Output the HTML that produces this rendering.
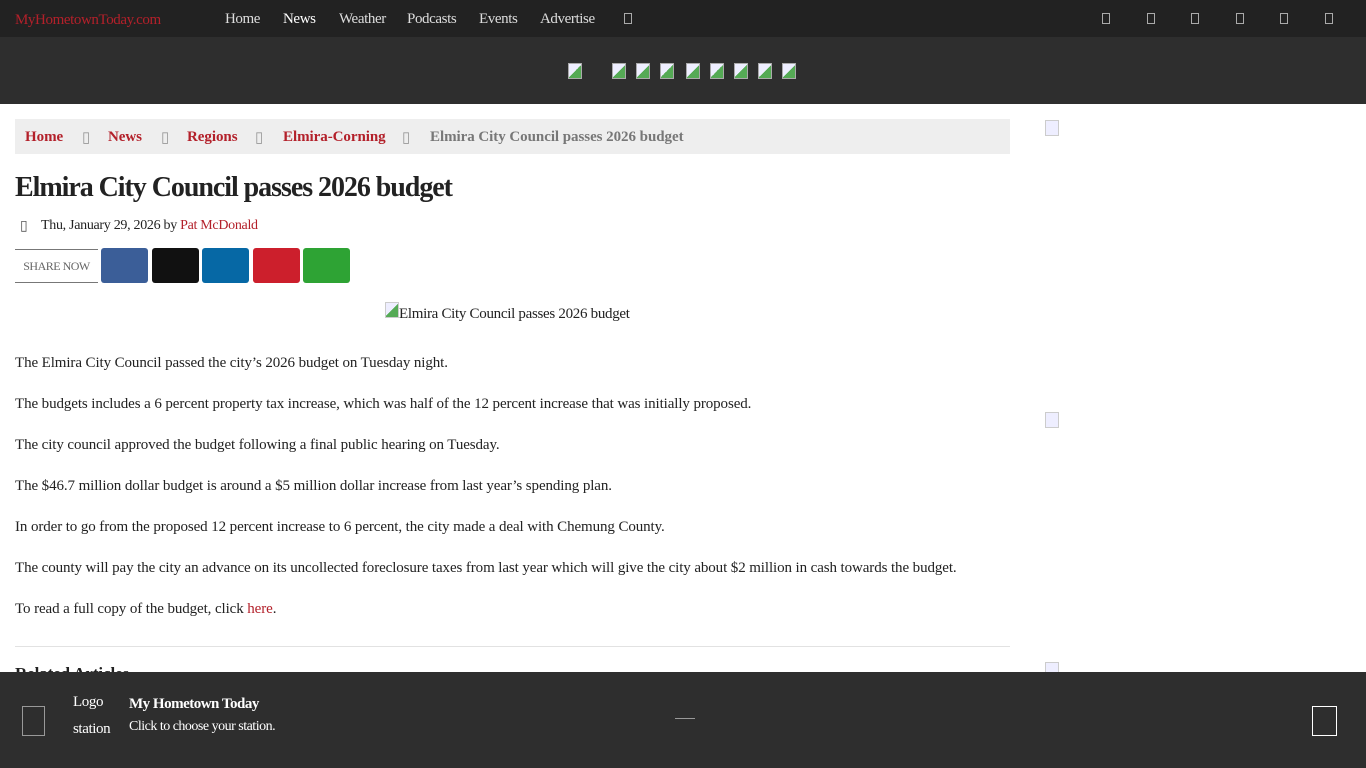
<!DOCTYPE html>
<html><head><meta charset="utf-8"><style>
*{box-sizing:border-box;margin:0;padding:0}
body{width:1366px;height:768px;overflow:hidden;background:#fff;font-family:"Liberation Serif",serif;color:#222;position:relative}
.top{height:37px;background:#222;position:relative}
.top span{position:absolute;top:11px;font-size:15px;color:#ddd;letter-spacing:-0.4px}
.band{height:67px;background:#2e2e2e;position:relative}
.ic{position:absolute;width:14px;height:16px;border:1px solid #aaa;background:linear-gradient(135deg,#eef 50%,#5a5 50%)}
.bc{position:absolute;left:15px;top:119px;width:995px;height:35px;background:#eee;font-weight:bold;font-size:15px;letter-spacing:-0.05px}
.bc span{position:absolute;top:10px}
.bc .s{font-weight:normal;color:#999;top:9px}
.r{color:#b3202a}
h1{position:absolute;left:15px;top:172px;font-size:28px;letter-spacing:-1.05px;color:#222;font-weight:bold}
.meta{position:absolute;left:41px;top:218px;font-size:14px;letter-spacing:-0.3px}
.share{position:absolute;left:15px;top:249px;width:83px;height:34px;border-top:1px solid #777;border-bottom:1px solid #777;font-size:12px;color:#666;line-height:32px;text-align:center;letter-spacing:-0.5px}
.btn{position:absolute;top:248px;width:47px;height:35px;border-radius:3px}
.p{position:absolute;left:15px;font-size:15px;letter-spacing:-0.1px}
.foot{position:absolute;left:0;top:672px;width:1366px;height:96px;background:#2e2e2e;color:#fff}
.box{position:absolute;border:1px solid #aaa}
</style></head><body>
<div class="top">
<span style="left:15px;top:12px;color:#b3202a">MyHometownToday.com</span>
<span style="left:225px">Home</span><span style="left:283px;color:#fff">News</span><span style="left:339px">Weather</span><span style="left:407px">Podcasts</span><span style="left:479px">Events</span><span style="left:540px">Advertise</span>
<div class="box" style="left:624px;top:13px;width:8px;height:11px"></div>
<div class="box" style="left:1102px;top:13px;width:8px;height:11px"></div>
<div class="box" style="left:1147px;top:13px;width:8px;height:11px"></div>
<div class="box" style="left:1191px;top:13px;width:8px;height:11px"></div>
<div class="box" style="left:1236px;top:13px;width:8px;height:11px"></div>
<div class="box" style="left:1280px;top:13px;width:8px;height:11px"></div>
<div class="box" style="left:1325px;top:13px;width:8px;height:11px"></div>
</div>
<div class="band">
<div class="ic" style="left:568px;top:26px"></div>
<div class="ic" style="left:612px;top:26px"></div><div class="ic" style="left:636px;top:26px"></div><div class="ic" style="left:660px;top:26px"></div><div class="ic" style="left:686px;top:26px"></div><div class="ic" style="left:710px;top:26px"></div><div class="ic" style="left:734px;top:26px"></div><div class="ic" style="left:758px;top:26px"></div><div class="ic" style="left:782px;top:26px"></div>
</div>
<div class="bc">
<span class="r" style="left:10px">Home</span><span class="s" style="left:67px">▯</span>
<span class="r" style="left:93px">News</span><span class="s" style="left:146px">▯</span>
<span class="r" style="left:172px">Regions</span><span class="s" style="left:240px">▯</span>
<span class="r" style="left:268px">Elmira-Corning</span><span class="s" style="left:387px">▯</span>
<span style="left:415px;color:#777">Elmira City Council passes 2026 budget</span>
</div>
<h1>Elmira City Council passes 2026 budget</h1>
<div class="meta" style="left:20px;color:#555">▯</div>
<div class="meta">Thu, January 29, 2026 by <span class="r">Pat McDonald</span></div>
<div class="share">SHARE NOW</div>
<div class="btn" style="left:101px;background:#3b5e98"></div>
<div class="btn" style="left:152px;background:#111"></div>
<div class="btn" style="left:202px;background:#0668a5"></div>
<div class="btn" style="left:253px;background:#cc1f2c"></div>
<div class="btn" style="left:303px;background:#2ea334"></div>
<div class="ic" style="left:385px;top:302px;width:14px;height:16px;border-color:#ccc"></div>
<div class="p" style="left:399px;top:306px;letter-spacing:-0.3px">Elmira City Council passes 2026 budget</div>
<div class="p" style="top:355px">The Elmira City Council passed the city’s 2026 budget on Tuesday night.</div>
<div class="p" style="top:396px">The budgets includes a 6 percent property tax increase, which was half of the 12 percent increase that was initially proposed.</div>
<div class="p" style="top:437px">The city council approved the budget following a final public hearing on Tuesday.</div>
<div class="p" style="top:478px">The $46.7 million dollar budget is around a $5 million dollar increase from last year’s spending plan.</div>
<div class="p" style="top:519px">In order to go from the proposed 12 percent increase to 6 percent, the city made a deal with Chemung County.</div>
<div class="p" style="top:560px">The county will pay the city an advance on its uncollected foreclosure taxes from last year which will give the city about $2 million in cash towards the budget.</div>
<div class="p" style="top:601px">To read a full copy of the budget, click <span class="r">here</span>.</div>
<div style="position:absolute;left:15px;top:646px;width:995px;height:1px;background:#e2e2e2"></div>
<div class="p" style="top:664px;font-weight:bold;font-size:17px">Related Articles</div>
<div class="ic" style="left:1045px;top:120px;background:#eef;border-color:#ccc"></div>
<div class="ic" style="left:1045px;top:412px;background:#eef;border-color:#ccc"></div>
<div class="ic" style="left:1045px;top:662px;background:#eef;border-color:#ccc"></div>
<div class="foot">
<div class="box" style="left:22px;top:34px;width:23px;height:30px;border-color:#999"></div>
<div style="position:absolute;left:73px;top:22px;font-size:15px;letter-spacing:-0.4px">Logo</div>
<div style="position:absolute;left:73px;top:49px;font-size:15px;letter-spacing:-0.4px">station</div>
<div style="position:absolute;left:129px;top:24px;font-size:15px;font-weight:bold;letter-spacing:-0.5px">My Hometown Today</div>
<div style="position:absolute;left:129px;top:47px;font-size:14px;letter-spacing:-0.5px">Click to choose your station.</div>
<div style="position:absolute;left:675px;top:46px;width:20px;height:2px;border-top:1px solid #999"></div>
<div class="box" style="left:1312px;top:34px;width:25px;height:30px;border-color:#fff"></div>
</div>
</body></html>
